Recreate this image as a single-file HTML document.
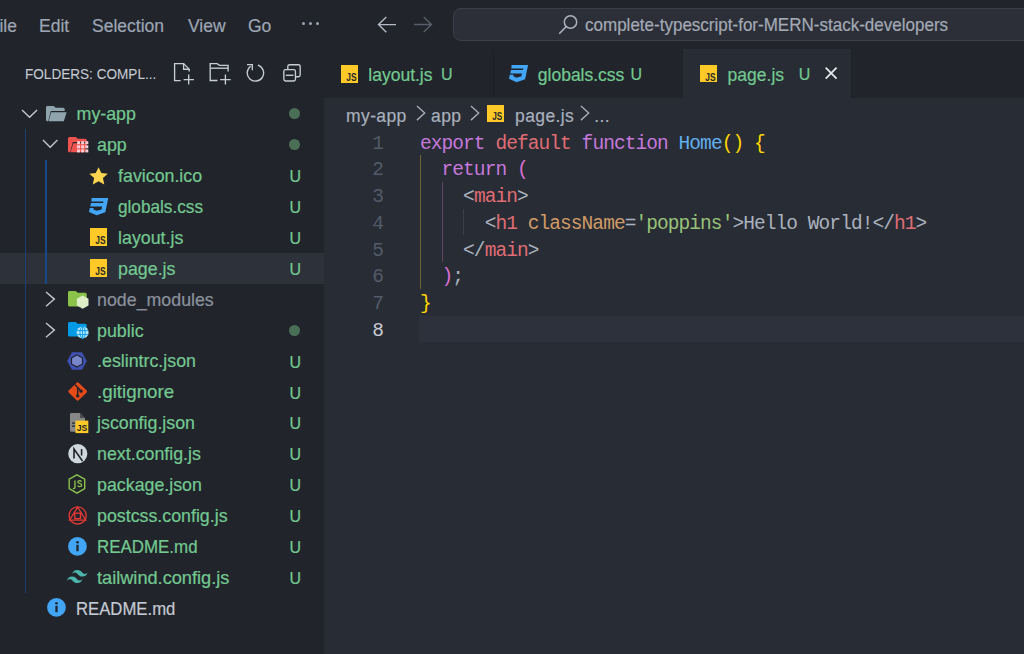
<!DOCTYPE html>
<html><head><meta charset="utf-8">
<style>
*{margin:0;padding:0;box-sizing:border-box}
html,body{width:1024px;height:654px;overflow:hidden;background:#21252b;font-family:"Liberation Sans",sans-serif;-webkit-text-stroke:0.2px currentColor}
.abs{position:absolute}
.ico{position:absolute;overflow:visible}
.menu{position:absolute;top:14.5px;font-size:17.5px;color:#9da5b4;line-height:22px;white-space:nowrap}
#search{left:453px;top:8px;width:600px;height:33px;border:1.4px solid #3b3f4a;border-radius:8px;background:#2c2f37}
#stxt{position:absolute;left:585px;top:13.5px;font-size:18.6px;transform:scaleX(0.915);transform-origin:0 0;color:#a3aab6;line-height:22px;white-space:nowrap}
#shead{-webkit-text-stroke:0.05px;position:absolute;left:24.8px;top:64px;font-size:15px;transform:scaleX(0.905);transform-origin:0 0;color:#c8ccd4;line-height:20px;white-space:nowrap}
.row{position:absolute;left:0;width:324px;height:30.8px}
.nm{position:absolute;line-height:30.8px;font-size:17.8px;color:#73c991;white-space:nowrap}
.U{position:absolute;left:289.5px;line-height:30.8px;font-size:16px;color:#73c991}
.dot{position:absolute;left:289px;width:11px;height:11px;border-radius:50%;background:#4b6e57}
.tname{position:absolute;top:63px;font-size:17.5px;color:#73c991;line-height:24px;white-space:nowrap}
.bc{position:absolute;top:105px;font-size:17.5px;letter-spacing:0.4px;color:#a9b0bd;line-height:22px;white-space:nowrap}
.ln{-webkit-text-stroke:0;position:absolute;left:340px;width:43px;text-align:right;font-family:"Liberation Mono",monospace;font-size:19.5px;letter-spacing:-0.85px;color:#535a68;line-height:26.6px}
.code{-webkit-text-stroke:0;position:absolute;left:420px;font-family:"Liberation Mono",monospace;font-size:19.5px;letter-spacing:-0.93px;color:#abb2bf;line-height:26.6px;white-space:pre}
.k{color:#c678dd}.r{color:#e06c75}.b{color:#61afef}.y{color:#ffd700}.p{color:#da70d6}.o{color:#d19a66}.g{color:#98c379}
</style></head><body>
<div class="abs" style="left:324px;top:98px;width:700px;height:556px;background:#282c34"></div>
<div class="menu" style="left:-11.3px">File</div>
<div class="menu" style="left:39px">Edit</div>
<div class="menu" style="left:92px">Selection</div>
<div class="menu" style="left:188px">View</div>
<div class="menu" style="left:248px">Go</div>
<div class="abs" style="left:301.90px;top:21.8px;width:3.2px;height:3.2px;border-radius:50%;background:#9da5b4"></div>
<div class="abs" style="left:308.80px;top:21.8px;width:3.2px;height:3.2px;border-radius:50%;background:#9da5b4"></div>
<div class="abs" style="left:315.70px;top:21.8px;width:3.2px;height:3.2px;border-radius:50%;background:#9da5b4"></div>
<svg class="ico" style="left:377.00px;top:15.70px;width:20.00px;height:17.20px" viewBox="0 0 20 17.2" preserveAspectRatio="none"><path d="M9.3 1L1.5 8.6L9.3 16.2M1.5 8.6H19" fill="none" stroke="#b4bac6" stroke-width="1.4"/></svg>
<svg class="ico" style="left:413.40px;top:15.90px;width:20.00px;height:17.00px" viewBox="0 0 20 17.2" preserveAspectRatio="none"><path d="M10.7 1L18.5 8.6L10.7 16.2M18.5 8.6H1" fill="none" stroke="#585e69" stroke-width="1.4"/></svg>
<div id="search" class="abs"></div>
<svg class="ico" style="left:557.50px;top:13.60px;width:20.50px;height:21.00px" viewBox="0 0 20.5 21" preserveAspectRatio="none"><circle cx="12.5" cy="8" r="6.2" fill="none" stroke="#a9b0bd" stroke-width="1.5"/><path d="M8.2 12.6L1.2 19.8" stroke="#a9b0bd" stroke-width="1.6"/></svg>
<div id="stxt">complete-typescript-for-MERN-stack-developers</div>
<div id="shead">FOLDERS: COMPL...</div>
<svg class="ico" style="left:170px;top:60px;width:66px;height:28px" viewBox="170 60 66 28"><path d="M180.6 80.6H174.6V63.6H183.6L189.2 69.2V71.5" fill="none" stroke="#c8ccd4" stroke-width="1.35"/><path d="M183.6 63.6V69.2H189.2" fill="none" stroke="#c8ccd4" stroke-width="1.35"/><path d="M183.6 79.6H193.9M188.7 74.6V84.6" fill="none" stroke="#c8ccd4" stroke-width="1.35"/><path d="M217.5 80.5H210.2V63.6H217.1L219.5 65.4H228.1V71.6" fill="none" stroke="#c8ccd4" stroke-width="1.35"/><path d="M210.8 68.2H228.1" fill="none" stroke="#c8ccd4" stroke-width="1.35"/><path d="M220.1 79.6H230.7M225.4 74.6V84.6" fill="none" stroke="#c8ccd4" stroke-width="1.35"/></svg>
<svg class="ico" style="left:240px;top:58px;width:68px;height:32px" viewBox="240 58 68 32"><path d="M257.93 65.1A8.2 8.2 0 1 1 250.7 66.18" fill="none" stroke="#c8ccd4" stroke-width="1.35"/><path d="M247 64.6H252.3V70.3" fill="none" stroke="#c8ccd4" stroke-width="1.35"/><rect x="287.8" y="64.7" width="12.4" height="12" rx="1.8" fill="none" stroke="#c8ccd4" stroke-width="1.35"/><rect x="283.85" y="69.65" width="11.6" height="11.3" rx="1.8" fill="#21252b" stroke="#c8ccd4" stroke-width="1.35"/><path d="M285.8 75.3H293.5" fill="none" stroke="#c8ccd4" stroke-width="1.35"/></svg>
<div class="abs" style="left:0;top:252.90px;width:324px;height:30.9px;background:#2c313a"></div>
<div class="abs" style="left:25px;top:129.30px;width:1.2px;height:463.50px;background:#1d416f"></div>
<div class="abs" style="left:45px;top:160.20px;width:2px;height:123.60px;background:#17498a"></div>
<div class="nm" style="left:76.60px;top:99.20px;color:#73c991">my-app</div>
<div class="dot" style="top:108.40px"></div>
<div class="nm" style="left:97.10px;top:130.10px;color:#73c991">app</div>
<div class="dot" style="top:139.30px"></div>
<div class="nm" style="left:118.10px;top:161.00px;color:#73c991">favicon.ico</div>
<div class="U" style="top:162.20px">U</div>
<div class="nm" style="left:118.10px;top:191.90px;color:#73c991;transform:scaleX(0.966);transform-origin:0 0">globals.css</div>
<div class="U" style="top:193.10px">U</div>
<div class="nm" style="left:118.10px;top:222.80px;color:#73c991">layout.js</div>
<div class="U" style="top:224.00px">U</div>
<div class="nm" style="left:118.10px;top:253.70px;color:#73c991">page.js</div>
<div class="U" style="top:254.90px">U</div>
<div class="nm" style="left:97.10px;top:284.60px;color:#8b919c">node_modules</div>
<div class="nm" style="left:97.10px;top:315.50px;color:#73c991">public</div>
<div class="dot" style="top:324.70px"></div>
<div class="nm" style="left:97.10px;top:346.40px;color:#73c991">.eslintrc.json</div>
<div class="U" style="top:347.60px">U</div>
<div class="nm" style="left:97.10px;top:377.30px;color:#73c991;transform:scaleX(1.055);transform-origin:0 0">.gitignore</div>
<div class="U" style="top:378.50px">U</div>
<div class="nm" style="left:97.10px;top:408.20px;color:#73c991">jsconfig.json</div>
<div class="U" style="top:409.40px">U</div>
<div class="nm" style="left:97.10px;top:439.10px;color:#73c991">next.config.js</div>
<div class="U" style="top:440.30px">U</div>
<div class="nm" style="left:97.10px;top:470.00px;color:#73c991">package.json</div>
<div class="U" style="top:471.20px">U</div>
<div class="nm" style="left:97.10px;top:500.90px;color:#73c991">postcss.config.js</div>
<div class="U" style="top:502.10px">U</div>
<div class="nm" style="left:97.10px;top:531.80px;color:#73c991;transform:scaleX(0.951);transform-origin:0 0">README.md</div>
<div class="U" style="top:533.00px">U</div>
<div class="nm" style="left:97.10px;top:562.70px;color:#73c991;transform:scaleX(1.022);transform-origin:0 0">tailwind.config.js</div>
<div class="U" style="top:563.90px">U</div>
<div class="nm" style="left:76.40px;top:593.60px;color:#c5cad3;transform:scaleX(0.94);transform-origin:0 0">README.md</div>
<svg class="ico" style="left:20.60px;top:108.60px;width:17.10px;height:9.50px" viewBox="0 0 17 9.5" preserveAspectRatio="none"><path d="M1 1L8.5 8.2L16 1" fill="none" stroke="#c5c8ce" stroke-width="1.4"/></svg>
<svg class="ico" style="left:41.80px;top:139.40px;width:16.40px;height:9.50px" viewBox="0 0 17 9.5" preserveAspectRatio="none"><path d="M1 1L8.5 8.2L16 1" fill="none" stroke="#c5c8ce" stroke-width="1.4"/></svg>
<svg class="ico" style="left:45.10px;top:290.70px;width:10.70px;height:16.20px" viewBox="0 0 10.7 16.2" preserveAspectRatio="none"><path d="M1 1L9.4 8.1L1 15.2" fill="none" stroke="#c5c8ce" stroke-width="1.4"/></svg>
<svg class="ico" style="left:45.10px;top:321.90px;width:10.70px;height:16.20px" viewBox="0 0 10.7 16.2" preserveAspectRatio="none"><path d="M1 1L9.4 8.1L1 15.2" fill="none" stroke="#c5c8ce" stroke-width="1.4"/></svg>
<svg class="ico" style="left:46.20px;top:106.10px;width:20.60px;height:15.30px" viewBox="0 0 20.6 15.3" preserveAspectRatio="none"><path d="M1.5 0h6.2l2 1.8h7.5a1.5 1.5 0 0 1 1.5 1.5v1.6H4.8L2.2 15.3H1.5A1.5 1.5 0 0 1 0 13.8V1.5A1.5 1.5 0 0 1 1.5 0z" fill="#90a4ae"/><path d="M5.2 6.2H20.6L17.8 15.3H2.6z" fill="#90a4ae"/></svg>
<svg class="ico" style="left:67.50px;top:137.00px;width:21.10px;height:16.00px" viewBox="0 0 21 16" preserveAspectRatio="none"><path d="M1.5 0h6.2l2 1.8h7.5a1.5 1.5 0 0 1 1.5 1.5v1.6H4.8L2.2 15.3H1.5A1.5 1.5 0 0 1 0 13.8V1.5A1.5 1.5 0 0 1 1.5 0z" fill="#ef5350"/><path d="M5.2 6.2H19L16.5 15.3H2.6z" fill="#ef5350"/><rect x="9.00" y="4.20" width="3" height="3" fill="#ffcdd2"/><rect x="13.10" y="4.20" width="3" height="3" fill="#ffcdd2"/><rect x="17.20" y="4.20" width="3" height="3" fill="#ffcdd2"/><rect x="9.00" y="8.30" width="3" height="3" fill="#ffcdd2"/><rect x="13.10" y="8.30" width="3" height="3" fill="#ffcdd2"/><rect x="17.20" y="8.30" width="3" height="3" fill="#ffcdd2"/><rect x="9.00" y="12.40" width="3" height="3" fill="#ffcdd2"/><rect x="13.10" y="12.40" width="3" height="3" fill="#ffcdd2"/><rect x="17.20" y="12.40" width="3" height="3" fill="#ffcdd2"/></svg>
<svg class="ico" style="left:88.80px;top:166.80px;width:19.10px;height:17.80px" viewBox="0 0 20 19" preserveAspectRatio="none"><path d="M10 0.3l2.9 6.2 6.8 0.7-5.1 4.6 1.4 6.8L10 15.2l-6 3.4 1.4-6.8L0.3 7.2l6.8-0.7z" fill="#ffd54f"/></svg>
<svg class="ico" style="left:88.70px;top:197.80px;width:19.30px;height:17.30px" viewBox="88.7 197.8 19.3 17.3" preserveAspectRatio="none"><path d="M91.3 197.8L108 197.8L105 212.1L96.4 215.1L88.7 211.7L89.5 207.7L93.3 207.7L93.1 209.2L96.4 210.6L101.2 209.2L101.8 206.3L90 206.3L90.7 202.9L102.8 202.9L103.2 201.3L91.1 201.3Z" fill="#42a5f5"/></svg>
<div class="ico" style="left:89.50px;top:228.40px;width:17.40px;height:17.40px;background:#ffca28"></div><svg class="ico" style="left:89.50px;top:228.40px;width:17.40px;height:17.40px" viewBox="0 0 16 16" preserveAspectRatio="none"><text x="4.9" y="14.5" font-family="Liberation Sans" font-weight="bold" font-size="9.6" textLength="9.5" lengthAdjust="spacingAndGlyphs" fill="#2b2b2b" stroke="none" style="-webkit-text-stroke:0">JS</text></svg>
<div class="ico" style="left:89.50px;top:259.20px;width:17.40px;height:17.40px;background:#ffca28"></div><svg class="ico" style="left:89.50px;top:259.20px;width:17.40px;height:17.40px" viewBox="0 0 16 16" preserveAspectRatio="none"><text x="4.9" y="14.5" font-family="Liberation Sans" font-weight="bold" font-size="9.6" textLength="9.5" lengthAdjust="spacingAndGlyphs" fill="#2b2b2b" stroke="none" style="-webkit-text-stroke:0">JS</text></svg>
<svg class="ico" style="left:67.70px;top:291.30px;width:20.60px;height:17.40px" viewBox="0 0 20.6 17.4" preserveAspectRatio="none"><path d="M1.5 0h6.2l2 1.8h7.5a1.5 1.5 0 0 1 1.5 1.5V14a1.5 1.5 0 0 1-1.5 1.5H1.5A1.5 1.5 0 0 1 0 14V1.5A1.5 1.5 0 0 1 1.5 0z" fill="#8bc34a"/><path d="M14.7 4.5l5.8 3.3v6.6l-5.8 3.3-5.8-3.3V7.8z" fill="#dcedc8"/></svg>
<svg class="ico" style="left:67.70px;top:322.40px;width:20.60px;height:16.60px" viewBox="0 0 20.6 16.6" preserveAspectRatio="none"><path d="M1.5 0h6.2l2 1.8h7.5a1.5 1.5 0 0 1 1.5 1.5V13a1.5 1.5 0 0 1-1.5 1.5H1.5A1.5 1.5 0 0 1 0 13V1.5A1.5 1.5 0 0 1 1.5 0z" fill="#039be5"/><circle cx="14.6" cy="10.6" r="6" fill="#b3e5fc"/><path d="M9 8.6h11.2M9 12.6h11.2M14.6 4.6v12" stroke="#039be5" stroke-width="0.9"/><ellipse cx="14.6" cy="10.6" rx="2.6" ry="6" fill="none" stroke="#039be5" stroke-width="0.9"/></svg>
<svg class="ico" style="left:67.20px;top:351.90px;width:20.00px;height:17.90px" viewBox="0 0 20 18" preserveAspectRatio="none"><path d="M5 0.2h10l4.8 8.8-4.8 8.8H5L0.2 9z" fill="#3f51b5"/><path d="M10 2.2l6.1 3.4v6.8L10 15.8 3.9 12.4V5.6z" fill="#21252b"/><path d="M10 3.6l4.9 2.7v5.4L10 14.4 5.1 11.7V6.3z" fill="#7986cb"/></svg>
<svg class="ico" style="left:67.60px;top:382.20px;width:19.30px;height:18.90px" viewBox="0 0 19.3 19" preserveAspectRatio="none"><path d="M8.4 0.9a1.8 1.8 0 0 1 2.5 0l7.5 7.4a1.8 1.8 0 0 1 0 2.5l-7.5 7.4a1.8 1.8 0 0 1-2.5 0L0.9 10.8a1.8 1.8 0 0 1 0-2.5z" fill="#e64a19"/><path d="M6.8 2.6l2.9 2.9V14M9.7 5.5L13 9" fill="none" stroke="#21252b" stroke-width="1.5"/><circle cx="9.7" cy="14" r="1.7" fill="#21252b"/><circle cx="13.1" cy="9.2" r="1.7" fill="#21252b"/></svg>
<svg class="ico" style="left:69.50px;top:413.00px;width:18.30px;height:20.10px" viewBox="0 0 18.3 20.1" preserveAspectRatio="none"><path d="M1.5 0H10l5 5V18.8H1.5A1.5 1.5 0 0 1 0 17.3V1.5A1.5 1.5 0 0 1 1.5 0z" fill="#878787"/><path d="M10 0v5h5z" fill="#21252b" opacity="0.6"/><path d="M2 10.2h3M2 13.2h3" stroke="#21252b" stroke-width="1.2"/><rect x="5.5" y="7.6" width="12.8" height="12.5" fill="#ffca28"/><text x="11.9" y="17.6" font-family="Liberation Sans" font-weight="bold" font-size="8.6" text-anchor="middle" fill="#21252b">JS</text></svg>
<svg class="ico" style="left:67.60px;top:443.70px;width:19.60px;height:19.40px" viewBox="0 0 19.6 19.4" preserveAspectRatio="none"><circle cx="9.8" cy="9.7" r="9.6" fill="#cfd8dc"/><path d="M6 14.5V5L14.5 17M13.6 5V11.5" fill="none" stroke="#21252b" stroke-width="1.6"/></svg>
<svg class="ico" style="left:68.10px;top:474.20px;width:17.90px;height:19.90px" viewBox="0 0 18 20" preserveAspectRatio="none"><path d="M9 0.8l7.8 4.5v9.4L9 19.2 1.2 14.7V5.3z" fill="none" stroke="#8bc34a" stroke-width="1.4"/><path d="M7 6.5v6.8c0 1.2-.9 1.6-2 1.2" fill="none" stroke="#8bc34a" stroke-width="1.4"/><path d="M13.6 7.8c-.4-.8-1.2-1.1-2-1.1-1 0-1.7.6-1.7 1.4 0 1.8 3.9 1 3.9 3 0 1-.9 1.6-2 1.6-.9 0-1.7-.4-2.1-1.2" fill="none" stroke="#8bc34a" stroke-width="1.3"/></svg>
<svg class="ico" style="left:67.60px;top:506.00px;width:19.30px;height:18.90px" viewBox="0 0 19.3 19" preserveAspectRatio="none"><circle cx="9.65" cy="9.5" r="8.6" fill="none" stroke="#e53935" stroke-width="1.3"/><path d="M9.65 1.2L1.5 14.2H17.8z" fill="none" stroke="#e53935" stroke-width="1.3"/><rect x="6.8" y="7.2" width="5.7" height="5.5" fill="none" stroke="#e53935" stroke-width="1.4"/></svg>
<svg class="ico" style="left:67.80px;top:536.50px;width:18.90px;height:18.90px" viewBox="0 0 19 19" preserveAspectRatio="none"><circle cx="9.5" cy="9.5" r="9.4" fill="#42a5f5"/><rect x="8.4" y="7.8" width="2.3" height="6.5" fill="#21252b"/><circle cx="9.55" cy="5.3" r="1.3" fill="#21252b"/></svg>
<svg class="ico" style="left:46.70px;top:598.30px;width:18.90px;height:18.90px" viewBox="0 0 19 19" preserveAspectRatio="none"><circle cx="9.5" cy="9.5" r="9.4" fill="#42a5f5"/><rect x="8.4" y="7.8" width="2.3" height="6.5" fill="#21252b"/><circle cx="9.55" cy="5.3" r="1.3" fill="#21252b"/></svg>
<svg class="ico" style="left:66.80px;top:570.40px;width:20.60px;height:13.10px" viewBox="0 0 54 32.4" preserveAspectRatio="none"><path d="M27 0c-7.2 0-11.7 3.6-13.5 10.8 2.7-3.6 5.85-4.95 9.45-4.05 2.054.513 3.522 2.004 5.147 3.653C30.744 13.09 33.808 16.2 40.5 16.2c7.2 0 11.7-3.6 13.5-10.8-2.7 3.6-5.85 4.95-9.45 4.05-2.054-.513-3.522-2.004-5.147-3.653C36.756 3.11 33.692 0 27 0zM13.5 16.2C6.3 16.2 1.8 19.8 0 27c2.7-3.6 5.85-4.95 9.45-4.05 2.054.514 3.522 2.004 5.147 3.653C17.244 29.29 20.308 32.4 27 32.4c7.2 0 11.7-3.6 13.5-10.8-2.7 3.6-5.85 4.95-9.45 4.05-2.054-.513-3.522-2.004-5.147-3.653C23.256 19.31 20.192 16.2 13.5 16.2z" fill="#4db6ac"/></svg>
<div class="abs" style="left:683.3px;top:48.8px;width:167.6px;height:49.2px;background:#282c34"></div>
<div class="abs" style="left:492.5px;top:48.8px;width:1.2px;height:49.2px;background:#1b1e23"></div>
<div class="abs" style="left:851px;top:48.8px;width:1.2px;height:49.2px;background:#1d2025"></div>
<div class="ico" style="left:340.60px;top:65.00px;width:17.50px;height:17.50px;background:#ffca28"></div><svg class="ico" style="left:340.60px;top:65.00px;width:17.50px;height:17.50px" viewBox="0 0 16 16" preserveAspectRatio="none"><text x="4.9" y="14.5" font-family="Liberation Sans" font-weight="bold" font-size="9.6" textLength="9.5" lengthAdjust="spacingAndGlyphs" fill="#2b2b2b" stroke="none" style="-webkit-text-stroke:0">JS</text></svg>
<svg class="ico" style="left:508.90px;top:64.90px;width:19.10px;height:17.20px" viewBox="88.7 197.8 19.3 17.3" preserveAspectRatio="none"><path d="M91.3 197.8L108 197.8L105 212.1L96.4 215.1L88.7 211.7L89.5 207.7L93.3 207.7L93.1 209.2L96.4 210.6L101.2 209.2L101.8 206.3L90 206.3L90.7 202.9L102.8 202.9L103.2 201.3L91.1 201.3Z" fill="#42a5f5"/></svg>
<div class="ico" style="left:699.90px;top:65.00px;width:17.40px;height:17.40px;background:#ffca28"></div><svg class="ico" style="left:699.90px;top:65.00px;width:17.40px;height:17.40px" viewBox="0 0 16 16" preserveAspectRatio="none"><text x="4.9" y="14.5" font-family="Liberation Sans" font-weight="bold" font-size="9.6" textLength="9.5" lengthAdjust="spacingAndGlyphs" fill="#2b2b2b" stroke="none" style="-webkit-text-stroke:0">JS</text></svg>
<div class="tname" style="left:368.30px">layout.js</div>
<div class="tname" style="left:537.80px">globals.css</div>
<div class="tname" style="left:727.60px">page.js</div>
<div class="tname" style="left:441.00px;font-size:16px;top:63px">U</div>
<div class="tname" style="left:630.40px;font-size:16px;top:63px">U</div>
<div class="tname" style="left:798.70px;font-size:16px;top:63px">U</div>
<svg class="ico" style="left:825.30px;top:67.30px;width:12.30px;height:12.30px" viewBox="0 0 12.3 12.3" preserveAspectRatio="none"><path d="M0.7 0.7L11.6 11.6M11.6 0.7L0.7 11.6" stroke="#e6e9ee" stroke-width="1.75"/></svg>
<div class="bc" style="left:346.00px">my-app</div>
<div class="bc" style="left:431.00px">app</div>
<div class="bc" style="left:515.00px">page.js</div>
<div class="bc" style="left:594.20px">...</div>
<svg class="ico" style="left:416.30px;top:104.90px;width:9.90px;height:16.10px" viewBox="0 0 10.7 16.2" preserveAspectRatio="none"><path d="M1 1L9.4 8.1L1 15.2" fill="none" stroke="#a9b0bd" stroke-width="1.4"/></svg>
<svg class="ico" style="left:469.60px;top:104.90px;width:9.90px;height:16.10px" viewBox="0 0 10.7 16.2" preserveAspectRatio="none"><path d="M1 1L9.4 8.1L1 15.2" fill="none" stroke="#a9b0bd" stroke-width="1.4"/></svg>
<svg class="ico" style="left:579.50px;top:104.90px;width:9.90px;height:16.10px" viewBox="0 0 10.7 16.2" preserveAspectRatio="none"><path d="M1 1L9.4 8.1L1 15.2" fill="none" stroke="#a9b0bd" stroke-width="1.4"/></svg>
<div class="ico" style="left:486.90px;top:105.20px;width:17.00px;height:17.00px;background:#ffca28"></div><svg class="ico" style="left:486.90px;top:105.20px;width:17.00px;height:17.00px" viewBox="0 0 16 16" preserveAspectRatio="none"><text x="4.9" y="14.5" font-family="Liberation Sans" font-weight="bold" font-size="9.6" textLength="9.5" lengthAdjust="spacingAndGlyphs" fill="#2b2b2b" stroke="none" style="-webkit-text-stroke:0">JS</text></svg>
<div class="abs" style="left:419.3px;top:315.60px;width:605px;height:26.7px;background:#2c313c"></div>
<div class="abs" style="left:420px;top:155.40px;width:1.3px;height:133.50px;background:#6f6330"></div>
<div class="abs" style="left:441.6px;top:182.10px;width:1.3px;height:80.10px;background:#5f4563"></div>
<div class="abs" style="left:463px;top:208.80px;width:1.3px;height:26.70px;background:#3b4048"></div>
<div class="ln" style="top:130.70px">1</div>
<div class="ln" style="top:157.40px">2</div>
<div class="ln" style="top:184.10px">3</div>
<div class="ln" style="top:210.80px">4</div>
<div class="ln" style="top:237.50px">5</div>
<div class="ln" style="top:264.20px">6</div>
<div class="ln" style="top:290.90px">7</div>
<div class="ln" style="top:317.60px;color:#c8cdd5">8</div>
<div class="code" style="top:130.70px"><span class="k">export</span> <span class="r">default</span> <span class="k">function</span> <span class="b">Home</span><span class="y">()</span> <span class="y">{</span></div>
<div class="code" style="top:157.40px">  <span class="k">return</span> <span class="p">(</span></div>
<div class="code" style="top:184.10px">    &lt;<span class="r">main</span>&gt;</div>
<div class="code" style="top:210.80px">      &lt;<span class="r">h1</span> <span class="o">className</span>=<span class="g">'poppins'</span>&gt;Hello World!&lt;/<span class="r">h1</span>&gt;</div>
<div class="code" style="top:237.50px">    &lt;/<span class="r">main</span>&gt;</div>
<div class="code" style="top:264.20px">  <span class="p">)</span>;</div>
<div class="code" style="top:290.90px"><span class="y">}</span></div>
</body></html>
